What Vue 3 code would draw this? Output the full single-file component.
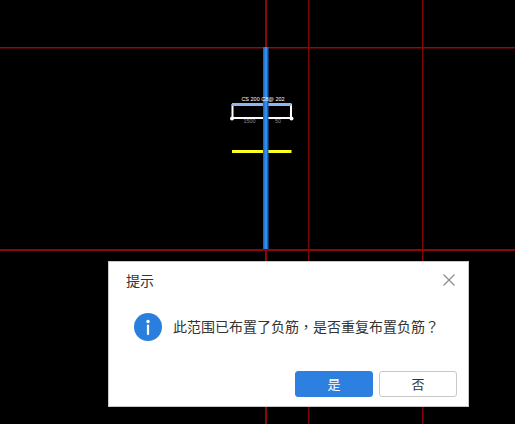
<script setup>
const gridLines = [
  { x: 0, y: 47, w: 515, h: 1.5, color: "#96090a" },
  { x: 0, y: 249, w: 515, h: 2, color: "#8c0808" },
  { x: 265, y: 0, w: 2, h: 424, color: "#8c0808" },
  { x: 308, y: 0, w: 1.5, h: 424, color: "#7a0606" },
  { x: 422, y: 0, w: 1.5, h: 424, color: "#800707" },
];
</script>

<template>
  <div class="page">
    <svg class="drawing" width="515" height="424" viewBox="0 0 515 424">
      <rect
        v-for="(l, index) in gridLines"
        :key="index"
        :x="l.x"
        :y="l.y"
        :width="l.w"
        :height="l.h"
        :fill="l.color"
      />
      <path d="M232.5 104V118M291 104V118" stroke="#fff" stroke-width="2" fill="none" />
      <rect x="232" y="103" width="59.500" height="3" fill="#8fb6ee" />
      <rect x="232" y="117" width="59.500" height="2" fill="#fff" />
      <circle cx="232" cy="118.500" r="2" fill="#fff" />
      <circle cx="291.500" cy="118.500" r="2" fill="#fff" />
      <rect x="232" y="150" width="59.500" height="3" fill="#ffff22" />
      <rect x="263" y="47" width="5.500" height="202" fill="#1c66c0" />
      <rect x="264.500" y="47" width="2.500" height="202" fill="#2f8df0" />
      <text x="263" y="101" class="label" text-anchor="middle" fill="#fff">CS 200 C8@ 202</text>
      <text x="249.500" y="122.500" class="label" text-anchor="middle" fill="#888">1500</text>
      <text x="278" y="122.500" class="label" text-anchor="middle" fill="#888">50</text>
    </svg>

    <div class="dialog">
      <div class="dialog-head">
        <span class="dialog-title">提示</span>
        <svg class="close" width="12" height="12" viewBox="0 0 12 12">
          <path d="M0.500 0.500L11.500 11.500M11.500 0.500L0.500 11.500" stroke="#8c8c8c" stroke-width="1.200" fill="none" />
        </svg>
      </div>
      <div class="dialog-body">
        <svg class="info" width="28" height="28" viewBox="0 0 28 28">
          <circle cx="14" cy="14" r="14" fill="#2a7fde" />
          <circle cx="14" cy="8.500" r="1.700" fill="#fff" />
          <rect x="12.900" y="11.500" width="2.200" height="10.500" rx="1" fill="#fff" />
        </svg>
        <span class="message">此范围已布置了负筋<span class="punct">，</span>是否重复布置负筋<span class="punct">？</span></span>
      </div>
      <div class="dialog-foot">
        <button class="btn btn-primary">是</button>
        <button class="btn">否</button>
      </div>
    </div>
  </div>
</template>

<style scoped>
.page {
  position: relative;
  width: 515px;
  height: 424px;
  background: #000;
  overflow: hidden;
  font-family: "Noto Sans CJK SC", sans-serif;
}
.drawing {
  display: block;
}
.label {
  font-family: "Liberation Sans", sans-serif;
  font-size: 5.500px;
}
.dialog {
  position: absolute;
  left: 108px;
  top: 261px;
  width: 361px;
  height: 146px;
  box-sizing: border-box;
  background: #fff;
  border: 1px solid #c8c8c8;
  display: flex;
  flex-direction: column;
}
.dialog-head {
  display: flex;
  align-items: center;
  justify-content: space-between;
  height: 37px;
  padding: 0 13px 0 17px;
}
.dialog-title {
  font-size: 14px;
  color: #333;
  margin-bottom: 2px;
}
.close {
  margin-bottom: 2px;
}
.dialog-body {
  display: flex;
  align-items: center;
  gap: 11px;
  padding: 14px 0 0 25px;
}
.message {
  font-size: 14px;
  color: #333;
  white-space: nowrap;
  margin-bottom: 2px;
}
.punct {
  font-family: "Noto Sans CJK TC", sans-serif;
}
.dialog-foot {
  margin-top: auto;
  display: flex;
  justify-content: flex-end;
  gap: 6px;
  padding: 0 11px 9px 0;
}
.btn {
  width: 78px;
  height: 26px;
  box-sizing: border-box;
  padding: 0 0 2px;
  border: 1px solid #c8c8c8;
  border-radius: 3px;
  background: #fff;
  color: #333;
  font-family: inherit;
  font-size: 13px;
}
.btn-primary {
  background: #2d80e0;
  border-color: #2d80e0;
  color: #fff;
}
</style>

<style>
body {
  background: #000;
}
</style>
